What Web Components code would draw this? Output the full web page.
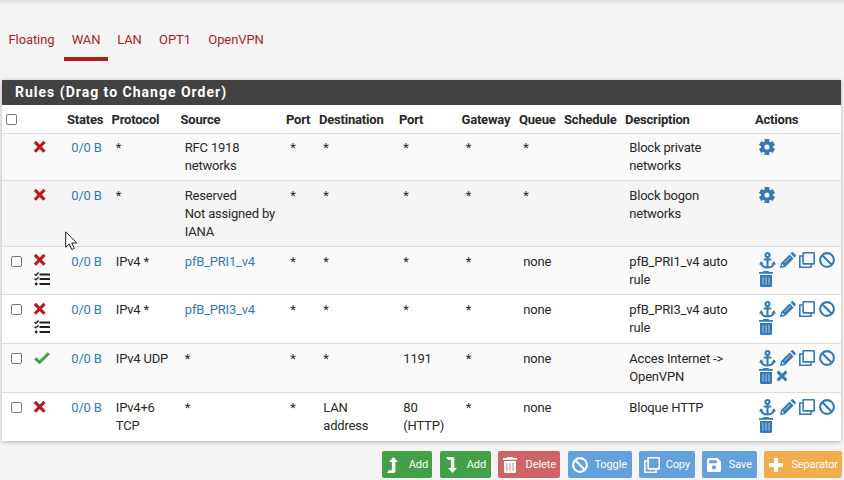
<!DOCTYPE html>
<html lang="en">
<head>
<meta charset="utf-8">
<title>Firewall rules</title>
<style>
html,body{margin:0;height:480px;overflow:hidden;background:#f4f4f4;font-family:Roboto,"Liberation Sans",sans-serif;font-size:13px;line-height:18px;color:#282828}
</style>
</head>
<body>
<firewall-page></firewall-page>
<script>
const ICONS = {
  x: [12,12,'<path d="M2 2 9.4 9.6M9.4 2 2 9.6" stroke="currentColor" stroke-width="3.2" fill="none" stroke-linecap="square" stroke-linejoin="round"/>'],
  x2: [12,12,'<path d="M1.6 1.6 10.4 10.4M10.4 1.6 1.6 10.4" stroke="currentColor" stroke-width="3" fill="none"/>'],
  check: [16,12,'<path d="M1.2 6.3 5.6 10.2 14.8 1.2" stroke="currentColor" stroke-width="3" fill="none"/>'],
  list: [16,14,'<path d="M5.5 2.5H16M5.5 7H16M5.5 12H16" stroke="currentColor" stroke-width="1.9"/><path d="M.6 2 1.9 3.2 4.6.5M.6 6.7 1.9 7.9 4.6 5.2" stroke="currentColor" stroke-width="1.4" fill="none"/><circle cx="2.2" cy="12" r="1.4"/>'],
  gear: [16,16,'<g stroke="currentColor" stroke-width="4.6"><path d="M8 0V3M8 13V16M1.1 4 4 5.7M12 10.3 14.9 12M1.1 12 4 10.3M12 5.7 14.9 4"/></g><circle cx="8" cy="8" r="4.3" fill="none" stroke="currentColor" stroke-width="3.5"/>'],
  anchor: [17,17,'<g fill="none" stroke="currentColor" stroke-width="2.1"><circle cx="8.5" cy="3" r="2"/><path d="M8.5 5V15.4M4.7 7.5H12.3M2 10.5C2.3 13.8 4.5 15.4 8.5 15.4S14.7 13.8 15 10.5"/></g><path d="M0 12.6 2 9.2 4.7 12.2ZM17 12.6 15 9.2 12.3 12.2Z"/>'],
  pencil: [16,16,'<path d="M0 16 1.1 10.9 9.6 2.4 13.6 6.4 5.1 14.9ZM10.5 1.5 11.5.5Q12.4-.3 13.3.5L15.5 2.7Q16.3 3.6 15.5 4.5L14.5 5.5Z"/><path d="M4.6 10.9 10.3 5.2" stroke="#c8d9e9" stroke-width="1"/><path d="M2 12.1V14H3.9L3.2 12.8Z" fill="#fafafa"/>'],
  clone: [16,16,'<g fill="none" stroke="currentColor" stroke-width="1.6"><rect x="4.1" y=".8" width="11.1" height="11.1" rx=".5"/><path d="M3.6 4H.8V15.2H12V12.5"/></g>'],
  ban: [16,16,'<g fill="none" stroke="currentColor" stroke-width="2.1"><circle cx="8" cy="8" r="6.9"/><path d="M3.2 3.2 12.8 12.8"/></g>'],
  trash: [14,16,'<path d="M4.5 0H9.5L10.2 1H14V2.7H0V1H3.8ZM1 4H13V14.5Q13 16 11.5 16H2.5Q1 16 1 14.5Z"/><path d="M4 6V13.7M7 6V13.7M10 6V13.7" stroke="var(--bars,#a3c0dc)" stroke-width="1.1"/>'],
  up: [11,16,'<path d="M6.5 0 11 5H8.4V14.2Q8.4 16 6.6 16H0L1.8 13.2H4.9V5H2Z"/>'],
  down: [11,16,'<path d="M6.5 16 11 11H8.4V1.8Q8.4 0 6.6 0H0L1.8 2.8H4.9V11H2Z"/>'],
  save: [14,14,'<path fill-rule="evenodd" d="M1.6 0H10.6L14 3.4V12.4Q14 14 12.4 14H1.6Q0 14 0 12.4V1.6Q0 0 1.6 0ZM2.2 2.2V5.2H9.8V2.2ZM7 7.3A2.1 2.1 0 1 0 7 11.5 2.1 2.1 0 1 0 7 7.3Z"/>'],
  plus: [14,14,'<path d="M7 0V14M0 7H14" stroke="currentColor" stroke-width="4"/>']
};
class FwIcon extends HTMLElement {
  connectedCallback() {
    const [w,h,body] = ICONS[this.getAttribute('name')];
    this.attachShadow({mode:'open'}).innerHTML = `<style>:host{display:block;flex:none;width:${w}px;height:${h}px}svg{display:block;overflow:visible}</style><svg width="${w}" height="${h}" viewBox="0 0 ${w} ${h}" fill="currentColor">${body}</svg>`;
  }
}
customElements.define('fw-icon', FwIcon);

class FwCheck extends HTMLElement {
  connectedCallback() {
    this.attachShadow({mode:'open'}).innerHTML = `<style>:host{display:block;box-sizing:border-box;width:11px;height:11px;border:1px solid #767676;border-radius:2px;background:#fff}</style>`;
  }
}
customElements.define('fw-check', FwCheck);

class FwTab extends HTMLElement {
  connectedCallback() {
    this.attachShadow({mode:'open'}).innerHTML = `<style>:host{display:block;box-sizing:border-box;height:36px;padding:6px 0 0;text-align:center;color:#ab1f24;border-bottom:4px solid transparent;white-space:nowrap;letter-spacing:-.1px}:host([active]){border-color:#ab1f24}</style><slot></slot>`;
  }
}
customElements.define('fw-tab', FwTab);

class FwButton extends HTMLElement {
  connectedCallback() {
    this.attachShadow({mode:'open'}).innerHTML = `<style>:host{display:flex;box-sizing:border-box;height:27px;align-items:center;justify-content:space-between;color:#fff;border-radius:2px;font-size:11px;letter-spacing:-.1px;white-space:nowrap;--bars:#dd8a8c}</style><fw-icon name="${this.getAttribute('icon')}"></fw-icon><span><slot></slot></span>`;
  }
}
customElements.define('fw-button', FwButton);

class RuleRow extends HTMLElement {
  connectedCallback() {
    const a = n => this.getAttribute(n) || '';
    const cells = a('cells').split('|');
    const acts = a('actions').split(' ').filter(Boolean);
    const link = (t,i) => i === 1 && t.startsWith('pfB_') ? `<a>${t}</a>` : t;
    this.attachShadow({mode:'open'}).innerHTML = `<style>
      :host{display:grid;box-sizing:border-box;grid-template-columns:var(--cols);border-top:1px solid #ddd;padding-top:var(--top,6px);letter-spacing:-.2px}
      div{padding-left:4.3px;white-space:nowrap}
      a{color:#337ab7}
      .chk{padding:3px 0 0 9px}
      .st{display:flex;flex-direction:column;padding:var(--st,2px) 0 0 3.6px;color:#b71c1c}
      .st.pass{color:#43a047}
      .st fw-icon + fw-icon{color:#212121;margin-top:var(--log,5px)}
      .act{display:flex;flex-wrap:wrap;align-content:flex-start;gap:var(--ag,1px) 3.6px;padding:0 0 0 4.2px;color:#337ab7;width:80px;margin-top:var(--at,0)}
      .act fw-icon[name=x2]{margin:2px 0 0 -1px}
    </style>
    <div class="chk">${this.hasAttribute('check')?'<fw-check></fw-check>':''}</div>
    <div class="st ${a('state')==='check'?'pass':''}"><fw-icon name="${a('state')}"></fw-icon>${this.hasAttribute('log')?'<fw-icon name="list"></fw-icon>':''}</div>
    <div><a>0/0 B</a></div>
    ${cells.map((c,i)=>`<div>${c.split('/n').map(t=>link(t,i)).join('<br>')}</div>`).join('')}
    <div class="act">${acts.map(i=>`<fw-icon name="${i}"></fw-icon>`).join('')}</div>`;
  }
}
customElements.define('rule-row', RuleRow);

class RuleTable extends HTMLElement {
  connectedCallback() {
    this.attachShadow({mode:'open'}).innerHTML = `<style>
      :host{display:block;width:839px;margin-left:2px;background:#fff;box-shadow:0 1px 4px rgba(0,0,0,.28);--cols:28px 37px 44.5px 69px 105.5px 33px 80px 62.5px 57.5px 45px 61px 130px 86px}
      h2{margin:0;box-sizing:border-box;height:25px;padding:0 13px;background:#424242;color:#fff;font-size:14px;font-weight:700;line-height:25px;letter-spacing:1px;white-space:nowrap}
      .head{display:grid;grid-template-columns:var(--cols);height:28px;line-height:29px;font-weight:700;white-space:nowrap;letter-spacing:-.2px}
      fw-check{margin:9px 0 0 4px}
    </style><h2>Rules (Drag to Change Order)</h2>
    <div class="head"><fw-check></fw-check><span></span>${['States','Protocol','Source','Port','Destination','Port','Gateway','Queue','Schedule','Description','Actions'].map(t=>`<span>${t}</span>`).join('')}</div><slot></slot>`;
  }
}
customElements.define('rule-table', RuleTable);

class FirewallPage extends HTMLElement {
  connectedCallback() {
    this.attachShadow({mode:'open'}).innerHTML = `<style>
      :host{display:block;position:relative;width:844px;height:480px;overflow:hidden}
      .edge{height:25px;background:linear-gradient(#dedede,#f4f4f4 6px)}
      nav{display:flex;height:55px}
      footer{display:flex;padding:10px 2px 0 382px}
      .cursor{position:absolute;left:65px;top:231px}
    </style>
    <div class="edge"></div>
    <nav><fw-tab style="width:63px">Floating</fw-tab><fw-tab active style="width:44px;margin-left:1px">WAN</fw-tab><fw-tab style="width:43px">LAN</fw-tab><fw-tab style="width:48px">OPT1</fw-tab><fw-tab style="width:74px">OpenVPN</fw-tab></nav>
    <rule-table>
      <rule-row style="height:47px;background:#fafafa;--top:5px" state="x" cells="*|RFC 1918/nnetworks|*|*|*|*|*||Block private/nnetworks" actions="gear"></rule-row>
      <rule-row style="height:66px;background:#f5f5f5" state="x" cells="*|Reserved/nNot assigned by/nIANA|*|*|*|*|*||Block bogon/nnetworks" actions="gear"></rule-row>
      <rule-row check log style="height:48px;background:#fafafa;--at:-1px;--ag:2px;--st:1px;--log:6px" state="x" cells="IPv4 *|pfB_PRI1_v4|*|*|*|*|none||pfB_PRI1_v4 auto/nrule" actions="anchor pencil clone ban trash"></rule-row>
      <rule-row check log style="height:49px" state="x" cells="IPv4 *|pfB_PRI3_v4|*|*|*|*|none||pfB_PRI3_v4 auto/nrule" actions="anchor pencil clone ban trash"></rule-row>
      <rule-row check style="height:49px;background:#fafafa" state="check" cells="IPv4 UDP|*|*|*|1191|*|none||Acces Internet -&gt;/nOpenVPN" actions="anchor pencil clone ban trash x2"></rule-row>
      <rule-row check style="height:49px" state="x" cells="IPv4+6/nTCP|*|*|LAN/naddress|80/n(HTTP)|*|none||Bloque HTTP" actions="anchor pencil clone ban trash"></rule-row>
    </rule-table>
    <footer>
      <fw-button icon="up" style="width:50px;padding:0 4px 0 5px;background:#43a047">Add</fw-button>
      <fw-button icon="down" style="width:51px;margin-left:8px;padding:0 5px 0 6px;background:#43a047">Add</fw-button>
      <fw-button icon="trash" style="width:62px;margin-left:7px;padding:0 4px 0 5px;background:#cf6466">Delete</fw-button>
      <fw-button icon="ban" style="width:64px;margin-left:8px;padding:0 5px 0 4px;background:#64a1dc">Toggle</fw-button>
      <fw-button icon="clone" style="width:56px;margin-left:7px;padding:0 5px;background:#64a1dc">Copy</fw-button>
      <fw-button icon="save" style="width:55px;margin-left:7px;padding:0 5px;background:#64a1dc">Save</fw-button>
      <fw-button icon="plus" style="width:78px;margin-left:7px;padding:0 4px 0 5px;background:#f0ad4e">Separator</fw-button>
    </footer>
    <svg class="cursor" width="13" height="20" viewBox="0 0 13 20"><path d="M.7.8V16.3L4.3 12.9 6.8 18.5 9.2 17.4 6.8 12H11.7Z" fill="#fff" stroke="#222" stroke-width="1"/></svg>`;
  }
}
customElements.define('firewall-page', FirewallPage);
</script>
</body>
</html>
